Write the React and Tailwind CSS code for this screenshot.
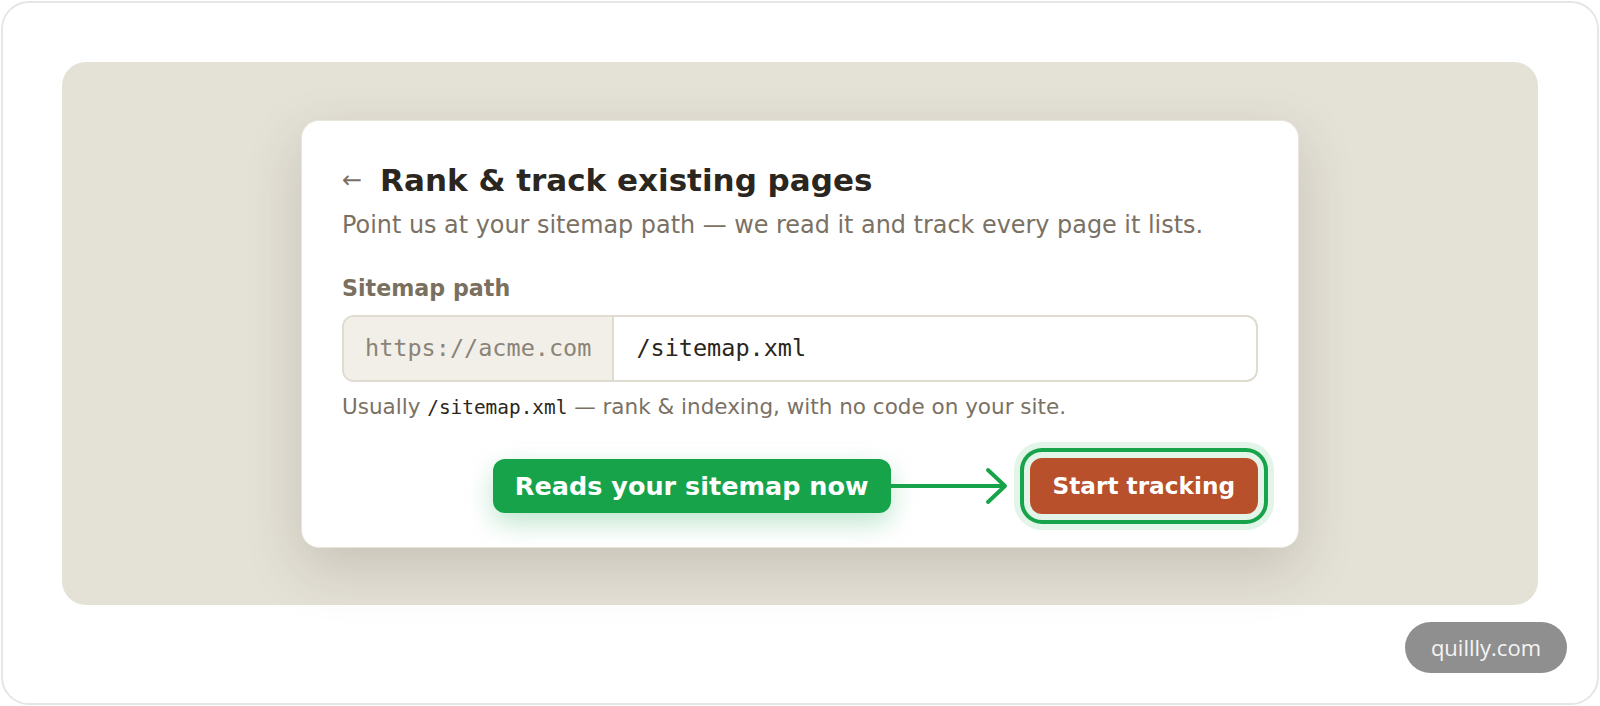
import React from "react";

function ArrowLine() {
  return (
    <svg width="118" height="40" viewBox="0 0 118 40" className="shrink-0 -ml-px">
      <path d="M0 20H114" stroke="#16a34a" strokeWidth="4" strokeLinecap="round" />
      <path d="M98 4L115 20L98 36" fill="none" stroke="#16a34a" strokeWidth="4" strokeLinecap="round" strokeLinejoin="round" />
    </svg>
  );
}

export default function App() {
  return (
    <div className="w-[1600px] h-[706px] bg-white p-px font-['DejaVu_Sans',sans-serif]">
      <div className="relative h-[704px] rounded-[28px] border-2 border-[#e6e6e6] pt-[59px] px-[59px]">
        <div className="h-[543px] rounded-[24px] bg-[#e4e1d7] flex items-center justify-center">
          <div className="w-[998px] h-[428px] rounded-[18px] bg-white border border-[#e9e5dc] shadow-[0_20px_56px_rgba(70,58,35,0.18)] px-[40px] pt-[41px]">
            <div className="flex items-center gap-[18px] leading-[1.2]">
              <span className="text-[24px] text-[#7a7164]">←</span>
              <h1 className="text-[31px] font-bold text-[#2b2620]">Rank &amp; track existing pages</h1>
            </div>
            <p className="mt-[10px] text-[23.9px] leading-[1.4] text-[#7a7164]">
              Point us at your sitemap path — we read it and track every page it lists.
            </p>
            <div className="mt-[32px] text-[22.2px] leading-[1.3] font-bold text-[#7a7060]">Sitemap path</div>
            <div className="mt-[12px] h-[67px] flex rounded-[12px] border-2 border-[#e0dbd0] overflow-hidden font-['DejaVu_Sans_Mono',monospace] text-[23.5px]">
              <div className="flex items-center px-[21px] bg-[#f2efe9] border-r-2 border-[#e0dbd0] text-[#8a8378]">https://acme.com</div>
              <div className="flex items-center px-[22px] text-[#2b2620]">/sitemap.xml</div>
            </div>
            <p className="mt-[10px] text-[21.5px] leading-[1.4] text-[#7a7164]">
              Usually <code className="font-['DejaVu_Sans_Mono',monospace] text-[19.4px] text-[#2b2620]">/sitemap.xml</code> — rank &amp; indexing, with no code on your site.
            </p>
            <div className="mt-[36px] flex items-center justify-end">
              <div className="h-[54px] flex items-center px-[22px] rounded-[12px] bg-[#16a34a] text-white text-[25.5px] font-bold shadow-[0_10px_26px_rgba(22,163,74,0.28)]">
                Reads your sitemap now
              </div>
              <ArrowLine />
              <button className="ml-[22px] h-[56px] px-[23px] rounded-[12px] bg-[#b9502c] text-white text-[23.2px] font-bold shadow-[0_0_0_6px_#e3f4e9,0_0_0_10px_#16a34a,0_0_0_16px_#e3f4e9]">
                Start tracking
              </button>
            </div>
          </div>
        </div>
        <div className="absolute right-[30px] bottom-[30px] h-[51px] px-[26px] flex items-center rounded-full bg-[#8f8f8f] text-[#f4f4f4] text-[22px] font-medium font-['Open_Sans',sans-serif]">
          quillly.com
        </div>
      </div>
    </div>
  );
}
